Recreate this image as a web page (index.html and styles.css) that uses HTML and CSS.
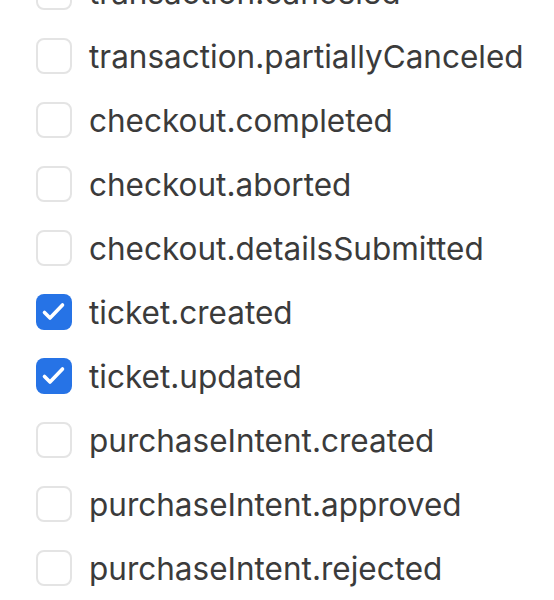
FILE: index.html
```html
<!DOCTYPE html>
<html>
<head>
<meta charset="utf-8">
<link rel="stylesheet" href="styles.css">
</head>
<body>
<ul class="list">
  <li class="row"><span class="box"></span><span class="label">transaction.canceled</span></li>
  <li class="row"><span class="box"></span><span class="label">transaction.partiallyCanceled</span></li>
  <li class="row"><span class="box"></span><span class="label">checkout.completed</span></li>
  <li class="row"><span class="box"></span><span class="label">checkout.aborted</span></li>
  <li class="row"><span class="box"></span><span class="label">checkout.detailsSubmitted</span></li>
  <li class="row"><span class="box checked"><svg viewBox="0 0 36 36" width="36" height="36"><path d="M8.5 18.5 L14 24 L26.5 11" fill="none" stroke="#fff" stroke-width="3.6" stroke-linecap="round" stroke-linejoin="round"/></svg></span><span class="label">ticket.created</span></li>
  <li class="row"><span class="box checked"><svg viewBox="0 0 36 36" width="36" height="36"><path d="M8.5 18.5 L14 24 L26.5 11" fill="none" stroke="#fff" stroke-width="3.6" stroke-linecap="round" stroke-linejoin="round"/></svg></span><span class="label">ticket.updated</span></li>
  <li class="row"><span class="box"></span><span class="label">purchaseIntent.created</span></li>
  <li class="row"><span class="box"></span><span class="label">purchaseIntent.approved</span></li>
  <li class="row"><span class="box"></span><span class="label">purchaseIntent.rejected</span></li>
</ul>
</body>
</html>
```
FILE: styles.css
```css
html, body {
  margin: 0;
  padding: 0;
  background: #fff;
  overflow: hidden;
}
.list {
  list-style: none;
  margin: -40px 0 0 0;
  padding: 0 0 0 36px;
  font-family: Inter, "Noto Sans", sans-serif;
}
.row {
  display: flex;
  align-items: center;
  gap: 17px;
  height: 64px;
}
.box {
  box-sizing: border-box;
  width: 36px;
  height: 36px;
  flex: none;
  border: 2px solid #e4e4e4;
  border-radius: 8px;
  background: #fff;
  display: flex;
}
.box.checked {
  border: none;
  background: #2673e6;
}
.box svg {
  display: block;
}
.label {
  font-size: 31.5px;
  color: #3b3b3b;
  letter-spacing: 0;
}
```
